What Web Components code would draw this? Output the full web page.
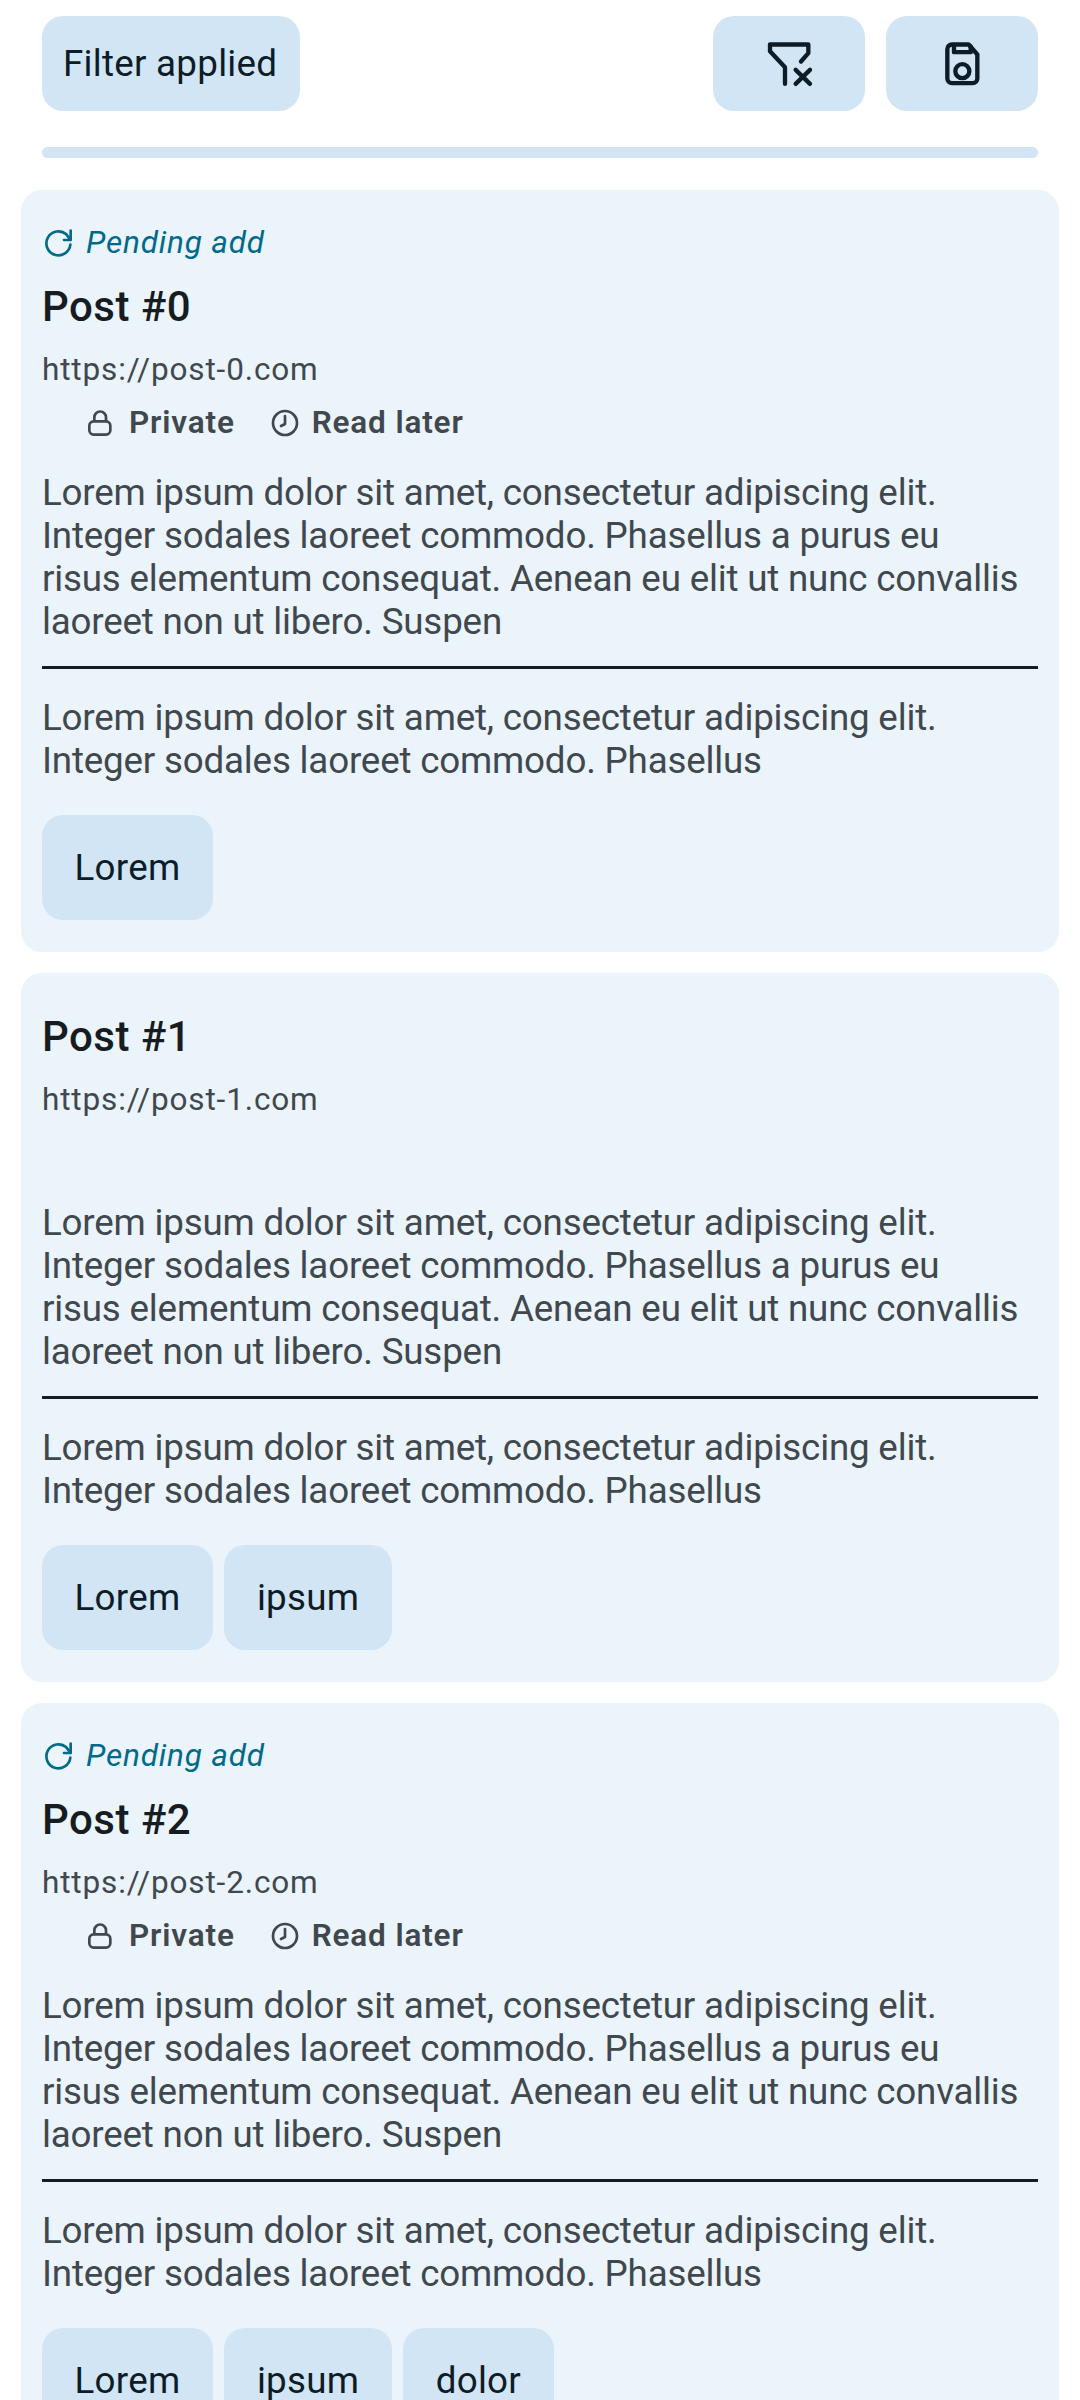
<!doctype html>
<html lang="en"><head><meta charset="utf-8"><title>Posts</title>
<style>
html,body{margin:0;padding:0;background:#fff}
body{width:1080px;height:2400px;overflow:hidden;font-family:Roboto,sans-serif}
</style></head><body>
<x-app>
  <x-toolbar>
    <x-btn slot="start">Filter applied</x-btn>
    <x-btn slot="end" icon="filter"></x-btn>
    <x-btn slot="end" icon="save"></x-btn>
  </x-toolbar>
  <x-post n="0" pending meta chips="Lorem"></x-post>
  <x-post n="1" chips="Lorem,ipsum"></x-post>
  <x-post n="2" pending meta chips="Lorem,ipsum,dolor"></x-post>
</x-app>
<script>
const ICONS={
 filter:'<path d="M45 42H160V68L138 93M45 42V62L90 110V160M122 118L165 160M165 118L122 160"/>',
 save:'<path d="M72 42H122L148 72V144a14 14 0 0 1-14 14H72a14 14 0 0 1-14-14V56a14 14 0 0 1 14-14Z"/><path d="M78 44V65H128V48"/><circle cx="103" cy="122" r="21"/>'
};
customElements.define('x-app',class extends HTMLElement{constructor(){super();this.attachShadow({mode:'open'}).innerHTML=`<style>:host{display:flex;flex-direction:column;gap:21px;padding:0 21px}</style><slot></slot>`}});
customElements.define('x-toolbar',class extends HTMLElement{constructor(){super();this.attachShadow({mode:'open'}).innerHTML=`<style>
:host{display:block;padding:16px 21px 0}
.row{display:flex;justify-content:space-between}
.end{display:flex;gap:21px}
.bar{height:11px;border-radius:6px;background:#d2e5f4;margin-top:36px;margin-bottom:11px}
</style><div class="row"><slot name="start"></slot><div class="end"><slot name="end"></slot></div></div><div class="bar"></div>`}});
customElements.define('x-btn',class extends HTMLElement{constructor(){super();const ic=this.getAttribute('icon');this.attachShadow({mode:'open'}).innerHTML=`<style>
:host{display:flex;align-items:center;justify-content:center;height:95px;border-radius:21px;background:#d2e5f4;color:#0d1c26;font:400 36.75px/44px Roboto,sans-serif;letter-spacing:.26px;box-sizing:border-box;${ic?'width:152px':'padding:0 23px 0 21px'}}
svg{width:70px;height:70px;fill:none;stroke:#0d1c26;stroke-width:13;stroke-linecap:round;stroke-linejoin:round;display:block}
</style>${ic?`<svg viewBox="-3 -4.5 210 210" aria-hidden="true">${ICONS[ic]}</svg>`:'<slot></slot>'}`}});
customElements.define('x-chip',class extends HTMLElement{constructor(){super();this.attachShadow({mode:'open'}).innerHTML=`<style>
:host{display:flex;align-items:center;height:105px;padding:0 32.5px;border-radius:21px;background:#d2e5f4;color:#0d1c26;font:400 36.75px/44px Roboto,sans-serif;letter-spacing:.26px}
</style><slot></slot>`}});
customElements.define('x-pending',class extends HTMLElement{constructor(){super();this.attachShadow({mode:'open'}).innerHTML=`<style>
:host{display:flex;align-items:center;height:44px;padding-top:9px;color:#006a8a;font:italic 400 31.5px/47px Roboto,sans-serif;letter-spacing:.84px}
svg{width:45px;height:45px;fill:none;stroke:currentColor;stroke-width:8;stroke-linecap:round;stroke-linejoin:round;flex:none;margin-right:-1px}
</style><svg viewBox="12 0 135 135" aria-hidden="true"><path d="M97 74A36 36 0 1 1 85 43L98 60M98 32V60H78"/></svg><slot></slot>`}});
customElements.define('x-meta',class extends HTMLElement{constructor(){super();const lock=this.getAttribute('icon')==='lock';this.attachShadow({mode:'open'}).innerHTML=`<style>
:host{display:flex;align-items:center;color:#40484e;font:600 31.5px/44px Roboto,sans-serif;letter-spacing:.85px}
svg{width:50px;height:45px;fill:none;stroke:currentColor;stroke-width:8;stroke-linecap:round;stroke-linejoin:round;flex:none;margin-right:${lock?0:1}px}
</style><svg viewBox="0 0 150 135" aria-hidden="true">${lock?'<path d="M46 62V52a17.5 17.5 0 0 1 35 0V62"/><rect x="31" y="64" width="63" height="40" rx="13"/>':'<circle cx="72" cy="69" r="36"/><path d="M72 48V72L60 78"/>'}</svg><slot></slot>`}});
customElements.define('x-post',class extends HTMLElement{constructor(){super();
 const n=this.getAttribute('n'),p=this.hasAttribute('pending'),m=this.hasAttribute('meta'),c=this.getAttribute('chips').split(',');
 this.attachShadow({mode:'open'}).innerHTML=`<style>
:host{display:block;background:#ebf3fb;border-radius:21px;padding:21px 21px 32px;color:#40484e}
h2{margin:0;height:84px;font:470 42px/85px Roboto,sans-serif;letter-spacing:.5px;color:#171c20}
.url{height:40px;font:400 31.5px/43px Roboto,sans-serif;letter-spacing:.86px}
.meta{display:flex;gap:26px;height:66px;align-items:center;padding:3px 0 0 37px;box-sizing:border-box}
p{margin:0;padding-right:16px;font:400 36.75px/43px Roboto,sans-serif;letter-spacing:-.19px}
.a{margin-top:17px}
hr{margin:23px 0 27px;height:3px;border:0;background:#171c20}
.chips{display:flex;gap:11.5px;margin-top:33px}
</style>
${p?'<x-pending>Pending add</x-pending>':''}
<h2>Post #${n}</h2>
<div class="url">https://post-${n}.com</div>
<div class="meta">${m?'<x-meta icon="lock">Private</x-meta><x-meta icon="clock">Read later</x-meta>':''}</div>
<p class="a">Lorem ipsum dolor sit amet, consectetur adipiscing elit. Integer sodales laoreet commodo. Phasellus a purus eu risus elementum consequat. Aenean eu elit ut nunc convallis laoreet non ut libero. Suspen</p>
<hr>
<p>Lorem ipsum dolor sit amet, consectetur adipiscing elit. Integer sodales laoreet commodo. Phasellus</p>
<div class="chips">${c.map(t=>`<x-chip>${t}</x-chip>`).join('')}</div>`}});
</script>
</body></html>
